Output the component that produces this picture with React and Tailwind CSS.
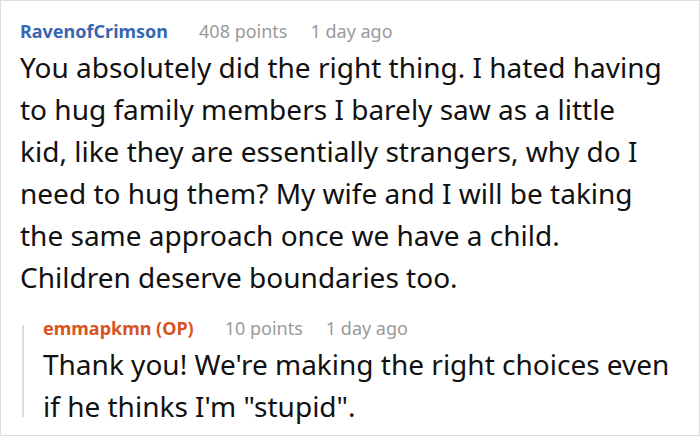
export default function App() {
  const lines = [
    "You absolutely did the right thing. I hated having",
    "to hug family members I barely saw as a little",
    "kid, like they are essentially strangers, why do I",
    "need to hug them? My wife and I will be taking",
    "the same approach once we have a child.",
    "Children deserve boundaries too.",
  ];
  return (
    <div
      className="w-[700px] h-[436px] border border-[#dcdcdc] bg-white pl-[19px] pt-[18px] overflow-hidden"
      style={{ fontFamily: '"Noto Sans", "Open Sans", sans-serif' }}
    >
      <div className="flex items-baseline text-[18px] leading-[24px]">
        <span className="font-bold text-[#3866b0]">RavenofCrimson</span>
        <span className="ml-[31px] text-[#9a9a9a]">408 points</span>
        <span className="ml-[23px] text-[#9a9a9a]">1 day ago</span>
      </div>
      <div className="mt-[3px] text-[28px] leading-[42px] text-[#111] whitespace-nowrap">
        {lines.map((l) => (
          <div key={l}>{l}</div>
        ))}
      </div>
      <div className="mt-[18px] flex">
        <div className="w-[2px] bg-[#dedede] ml-[2px] mt-[9px] mb-[10px] shrink-0" />
        <div className="pl-[19px]">
          <div className="flex items-baseline text-[18px] leading-[24px]">
            <span className="font-bold text-[#d9531f]">emmapkmn (OP)</span>
            <span className="ml-[31px] text-[#9a9a9a]">10 points</span>
            <span className="ml-[23px] text-[#9a9a9a]">1 day ago</span>
          </div>
          <div className="mt-[3px] text-[28px] leading-[42px] text-[#111] whitespace-nowrap">
            <div>Thank you! We're making the right choices even</div>
            <div>if he thinks I'm "stupid".</div>
          </div>
        </div>
      </div>
    </div>
  );
}
